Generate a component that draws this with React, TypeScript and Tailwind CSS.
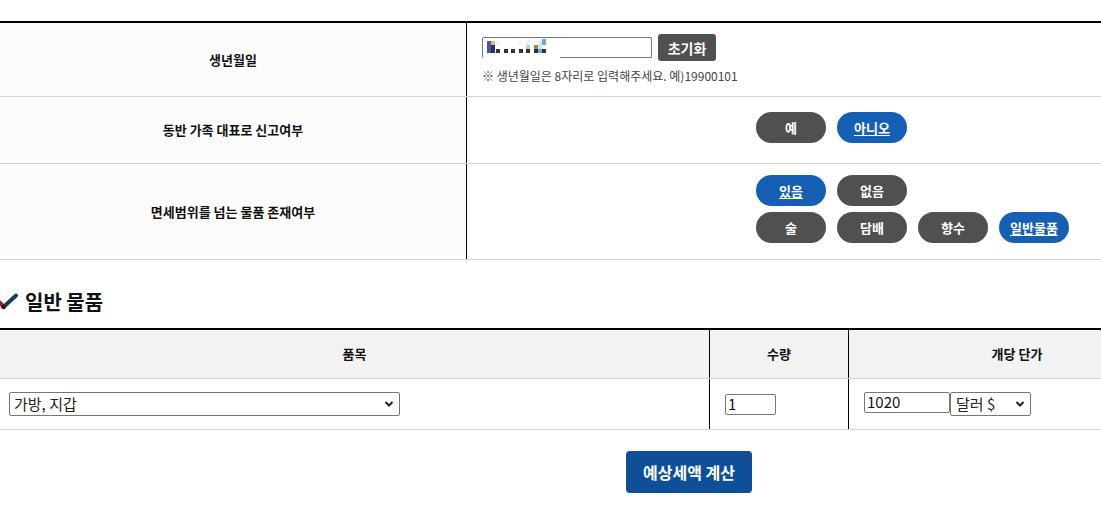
import React from "react";

const font = { fontFamily: '"Noto Sans CJK KR", "Noto Sans", sans-serif' };

function Pill({ label, active }: { label: string; active?: boolean }) {
  return (
    <button
      className={
        active
          ? "w-[70px] h-[31px] rounded-full bg-[#1560b4] text-white text-[13px] font-bold underline underline-offset-2 leading-none"
          : "w-[70px] h-[31px] rounded-full bg-[#505050] text-white text-[13px] font-bold leading-none"
      }
    >
      {label}
    </button>
  );
}

function Chevron() {
  return (
    <svg width="10" height="7" viewBox="0 0 10 7" className="absolute right-[5px] top-1/2 -translate-y-1/2 pointer-events-none">
      <path d="M1.5 1.5 L5 5 L8.5 1.5" fill="none" stroke="#222" strokeWidth="2" />
    </svg>
  );
}

function Px({ x, y, c, w = 4, h = 4 }: { x: number; y: number; c: string; w?: number; h?: number }) {
  return <div className="absolute" style={{ left: x, top: y, width: w, height: h, background: c }} />;
}

export default function App() {
  return (
    <div className="w-[1101px] h-[509px] overflow-hidden bg-white text-[#111]" style={font}>
      <div className="w-[1185px]">
        {/* top form table */}
        <div className="mt-[21px] border-t-2 border-black">
          <div className="flex border-b border-[#d4d4d4]">
            <div className="w-[467px] h-[73px] bg-[#fcfcfc] border-r border-black flex items-center justify-center text-[13px] font-bold">
              생년월일
            </div>
            <div className="flex-1 pl-[15px] pt-[11px]">
              <div className="flex items-center gap-[6px]">
                <div className="relative w-[170px] h-[21px] border border-b-0 border-[#767676] rounded-[2px] bg-white">
                  <Px x={4} y={3} c="#3b5ea8" w={4} h={12} />
                  <Px x={8} y={3} c="#f4b27a" />
                  <Px x={8} y={7} c="#27346a" h={8} />
                  <Px x={13} y={3} c="#fbf3d6" />
                  <Px x={13} y={11} c="#333" />
                  <Px x={21} y={11} c="#333" />
                  <Px x={28} y={11} c="#333" />
                  <Px x={35} y={3} c="#fcf6dc" />
                  <Px x={36} y={11} c="#333" />
                  <Px x={43} y={3} c="#dff8fb" />
                  <Px x={43} y={7} c="#9fd8f5" />
                  <Px x={43} y={11} c="#333" />
                  <Px x={51} y={7} c="#c07a2e" />
                  <Px x={51} y={11} c="#333" />
                  <Px x={55} y={3} c="#cdf3f8" />
                  <Px x={55} y={7} c="#bfe8f9" />
                  <Px x={55} y={11} c="#6aaee8" />
                  <Px x={59} y={1} c="#6aa6e3" h={6} />
                  <Px x={59} y={11} c="#333" />
                  <div className="absolute left-[77px] right-[-1px] bottom-0 h-[1px] bg-[#767676]" />
                </div>
                <button className="w-[58px] h-[27px] rounded-[3px] bg-[#505050] text-white text-[14px] font-bold leading-none">
                  초기화
                </button>
              </div>
              <div className="mt-[7px] text-[12px] leading-[16px] text-[#444]">
                ※ 생년월일은 8자리로 입력해주세요. 예)19900101
              </div>
            </div>
          </div>
          <div className="flex border-b border-[#d4d4d4]">
            <div className="w-[467px] h-[66px] bg-[#fcfcfc] border-r border-black flex items-center justify-center text-[13px] font-bold">
              동반 가족 대표로 신고여부
            </div>
            <div className="flex-1 pl-[289px] pt-[15px] flex gap-[11px] items-start">
              <Pill label="예" />
              <Pill label="아니오" active />
            </div>
          </div>
          <div className="flex border-b border-[#d4d4d4]">
            <div className="w-[467px] h-[95px] bg-[#fcfcfc] border-r border-black flex items-center justify-center text-[13px] font-bold">
              면세범위를 넘는 물품 존재여부
            </div>
            <div className="flex-1 pl-[289px] pt-[11px] flex flex-col gap-[6px]">
              <div className="flex gap-[11px]">
                <Pill label="있음" active />
                <Pill label="없음" />
              </div>
              <div className="flex gap-[11px]">
                <Pill label="술" />
                <Pill label="담배" />
                <Pill label="향수" />
                <Pill label="일반물품" active />
              </div>
            </div>
          </div>
        </div>

        {/* section title */}
        <div className="mt-[33px] h-[18px] flex items-center gap-[7px]">
          <svg width="18" height="18" viewBox="0 0 18 18">
            <path d="M-1 9 L3.5 13.5" stroke="#b0122c" strokeWidth="4" strokeLinecap="round" fill="none" />
            <path d="M3.5 14 L16 2.5" stroke="#163a66" strokeWidth="4" strokeLinecap="round" fill="none" />
            <circle cx="3.5" cy="14" r="2.2" fill="#2a1020" />
          </svg>
          <span className="text-[20px] font-bold leading-none">일반 물품</span>
        </div>

        {/* goods table */}
        <div className="mt-[17px] border-t-2 border-black">
          <div className="flex h-[49px] bg-[#f2f2f2] border-b border-[#d4d4d4] text-[13px] font-bold">
            <div className="w-[710px] border-r border-black flex items-center justify-center">품목</div>
            <div className="w-[139px] border-r border-black flex items-center justify-center">수량</div>
            <div className="flex-1 flex items-center justify-center">개당 단가</div>
          </div>
          <div className="flex h-[51px] border-b border-[#d4d4d4]">
            <div className="w-[710px] border-r border-black flex items-center pl-[9px]">
              <div className="relative w-[391px] h-[24px] border border-[#767676] rounded-[2px] flex items-center pl-[4px] text-[15px] text-[#222]">
                가방, 지갑
                <Chevron />
              </div>
            </div>
            <div className="w-[139px] border-r border-black flex items-center pl-[15px]">
              <div className="w-[51px] h-[21px] border border-[#767676] rounded-[2px] flex items-center pl-[2px] text-[15px] text-[#111]">
                1
              </div>
            </div>
            <div className="flex-1 flex items-center pl-[15px]">
              <div className="w-[86px] h-[21px] border border-[#767676] rounded-[2px] flex items-center pl-[2px] text-[15px] text-[#111] -mt-[3px]">
                1020
              </div>
              <div className="relative w-[81px] h-[24px] border border-[#767676] rounded-[2px] flex items-center pl-[5px] text-[15px] text-[#222]">
                달러 $
                <Chevron />
              </div>
            </div>
          </div>
        </div>

        <div className="mt-[21px] pl-[626px]">
          <button className="w-[126px] h-[42px] rounded-[4px] bg-[#0e4f98] text-white text-[16px] font-bold leading-none">
            예상세액 계산
          </button>
        </div>
      </div>
    </div>
  );
}
